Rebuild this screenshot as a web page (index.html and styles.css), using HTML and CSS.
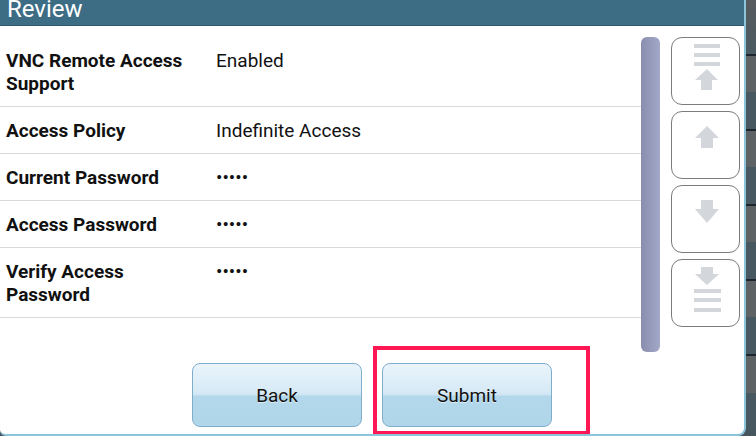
FILE: index.html
```html
<!DOCTYPE html>
<html>
<head>
<meta charset="utf-8">
<link rel="stylesheet" href="styles.css">
</head>
<body>
<div class="screen">
  <div class="dialog">
    <div class="header"><span class="title">Review</span></div>
    <div class="body">
      <div class="main">
        <div class="list">
          <div class="row"><div class="label">VNC Remote Access Support</div><div class="value">Enabled</div></div>
          <div class="row"><div class="label">Access Policy</div><div class="value">Indefinite Access</div></div>
          <div class="row"><div class="label">Current Password</div><div class="value">•••••</div></div>
          <div class="row"><div class="label">Access Password</div><div class="value">•••••</div></div>
          <div class="row"><div class="label">Verify Access Password</div><div class="value">•••••</div></div>
        </div>
        <div class="scrollbar"></div>
        <div class="nav">
          <div class="navbtn">
            <svg width="40" height="60" viewBox="0 0 40 60">
              <rect x="8" y="3" width="26" height="4" fill="#d3d6da"/>
              <rect x="8" y="12" width="26" height="4" fill="#d3d6da"/>
              <rect x="8" y="21" width="26" height="4" fill="#d3d6da"/>
              <polygon points="21,28 32,39 26,39 26,49 15,49 15,39 9,39" fill="#d3d6da"/>
            </svg>
          </div>
          <div class="navbtn">
            <svg width="40" height="60" viewBox="0 0 40 60">
              <polygon points="21,11 33,23 27,23 27,33 15,33 15,23 9,23" fill="#d3d6da"/>
            </svg>
          </div>
          <div class="navbtn">
            <svg width="40" height="60" viewBox="0 0 40 60">
              <polygon points="15,11 27,11 27,20 33,20 21,34 9,20 15,20" fill="#d3d6da"/>
            </svg>
          </div>
          <div class="navbtn">
            <svg width="40" height="60" viewBox="0 0 40 60">
              <polygon points="15,4 27,4 27,11 33,11 21,22 9,11 15,11" fill="#d3d6da"/>
              <rect x="8" y="26" width="27" height="4" fill="#d3d6da"/>
              <rect x="8" y="35" width="27" height="4" fill="#d3d6da"/>
              <rect x="8" y="45" width="27" height="4" fill="#d3d6da"/>
            </svg>
          </div>
        </div>
      </div>
      <div class="footer">
        <button class="btn">Back</button>
        <button class="btn">Submit</button>
      </div>
    </div>
    <div class="highlight"></div>
  </div>
  <div class="strip">
    <div class="seg top"></div>
    <div class="seg"></div>
    <div class="seg"></div>
    <div class="seg"></div>
    <div class="seg"></div>
    <div class="seg"></div>
  </div>
</div>
</body>
</html>
```
FILE: styles.css
```css
* { box-sizing: border-box; }
html, body {
  margin: 0;
  padding: 0;
  width: 756px;
  height: 436px;
  overflow: hidden;
  background: #46565e;
  font-family: Roboto, "Liberation Sans", sans-serif;
}
.screen {
  display: flex;
  width: 756px;
  height: 436px;
}
.dialog {
  position: relative;
  width: 746px;
  height: 436px;
  flex: 0 0 746px;
  background: #ffffff;
  border-right: 2px solid #8cc5d9;
  border-bottom: 2px solid #8cc5d9;
  border-bottom-left-radius: 6px;
  border-bottom-right-radius: 8px;
  overflow: hidden;
}
.header {
  height: 26px;
  background: #3d6c85;
  border-bottom: 1px solid #2b5a73;
  padding-left: 7px;
  overflow: hidden;
}
.title {
  display: block;
  color: #ffffff;
  font-size: 24px;
  line-height: 24px;
  margin-top: -3px;
}
.body {
  padding-top: 11px;
}
.main {
  display: flex;
  height: 315px;
}
.list {
  flex: 0 0 641px;
}
.row {
  display: grid;
  grid-template-columns: 185px 1fr;
  column-gap: 25px;
  padding: 12px 0 11px 6px;
  line-height: 23px;
  font-size: 19px;
  color: #111111;
  border-bottom: 1px solid #d9d9d9;
}
.label {
  font-weight: bold;
}
.scrollbar {
  flex: 0 0 19px;
  height: 315px;
  border-radius: 6px;
  background: linear-gradient(to right, #8a8eae, #a2a8c7);
}
.nav {
  margin-left: 11px;
  display: flex;
  flex-direction: column;
  gap: 6px;
}
.navbtn {
  width: 69px;
  height: 68px;
  border: 1px solid #7c7c7c;
  border-radius: 11px;
  background: #ffffff;
  display: flex;
  justify-content: center;
  align-items: center;
}
.navbtn svg { display: block; }
.footer {
  display: flex;
  justify-content: center;
  gap: 20px;
  margin-top: 11px;
}
.btn {
  width: 170px;
  height: 64px;
  border: 1px solid #7fadca;
  border-radius: 8px;
  background: linear-gradient(to bottom, #eaf4fb 0%, #d6eaf6 45%, #cde4f2 50%, #b3d8eb 52%, #b0d6ea 100%);
  font-family: Roboto, "Liberation Sans", sans-serif;
  font-size: 19px;
  color: #111111;
  text-shadow: 0 1px 0 rgba(255,255,255,0.6);
  padding: 0;
}
.highlight {
  position: absolute;
  left: 373px;
  top: 346px;
  width: 217px;
  height: 89px;
  border: 4px solid #ff1654;
}
.strip {
  flex: 1;
  display: flex;
  flex-direction: column;
}
.seg {
  height: 75px;
  border-top: 2px solid #1b252b;
  background: linear-gradient(to bottom, #5d6264 0%, #5d6264 50%, #485860 50%, #485860 100%);
}
.seg.top {
  height: 54px;
  border-top: none;
  background: linear-gradient(to bottom, #565b5e, #4a5a62);
}
```
